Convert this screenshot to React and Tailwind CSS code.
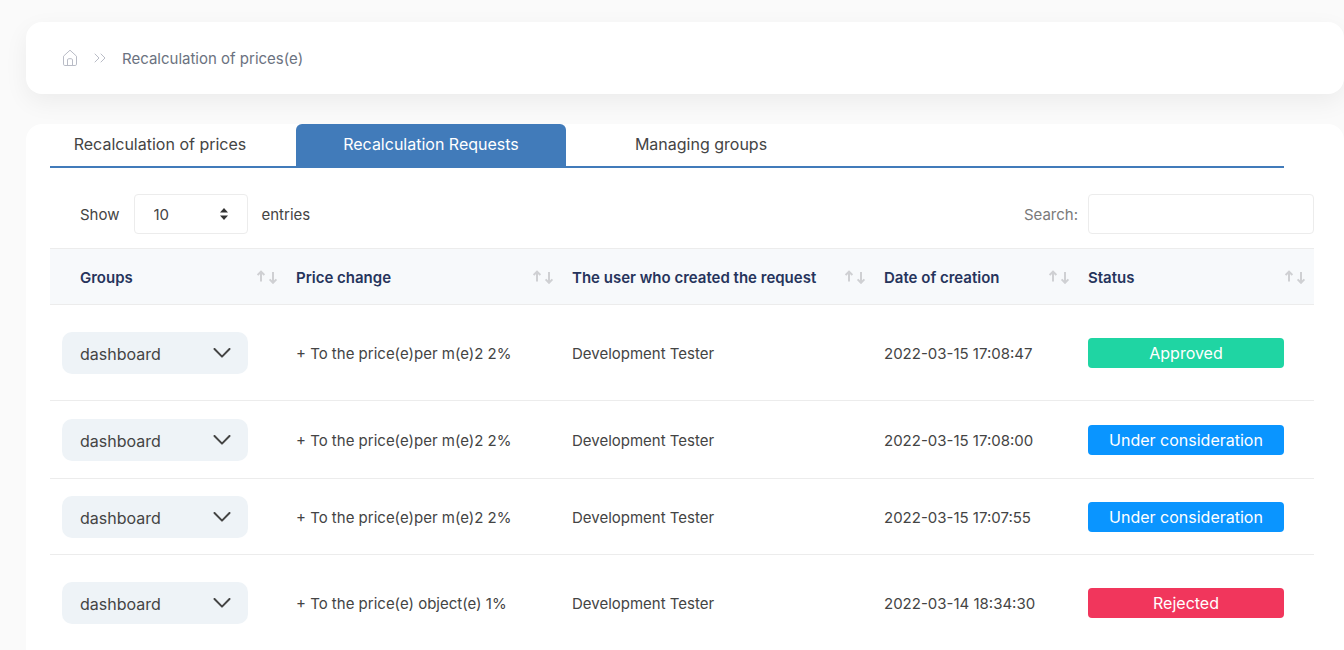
import React, { useState } from 'react';

const tabs = [
  { id: 'prices', label: 'Recalculation of prices', width: 'w-[246px] pr-[26px]' },
  { id: 'requests', label: 'Recalculation Requests', width: 'w-[270px]' },
  { id: 'groups', label: 'Managing groups', width: 'w-[270px]' },
];

const columns = [
  { key: 'groups', label: 'Groups', col: 'w-[234px]', pad: 'pr-1.5 pl-[30px]' },
  { key: 'change', label: 'Price change', col: 'w-[276px]', pad: 'pr-1.5 pl-3' },
  { key: 'user', label: 'The user who created the request', col: 'w-[312px]', pad: 'pr-1.5 pl-3' },
  { key: 'date', label: 'Date of creation', col: 'w-[204px]', pad: 'pr-1.5 pl-3' },
  { key: 'status', label: 'Status', col: 'w-[238px]', pad: 'pr-2 pl-3' },
];

const statusStyles = {
  Approved: 'bg-[#1fd5a3]',
  'Under consideration': 'bg-[#0a95ff]',
  Rejected: 'bg-[#f1365c]',
};

const requests = [
  { id: 1, change: '+ To the price(e)per m(e)2 2%', user: 'Development Tester', date: '2022-03-15 17:08:47', status: 'Approved', height: 'h-24' },
  { id: 2, change: '+ To the price(e)per m(e)2 2%', user: 'Development Tester', date: '2022-03-15 17:08:00', status: 'Under consideration', height: 'h-[78px]' },
  { id: 3, change: '+ To the price(e)per m(e)2 2%', user: 'Development Tester', date: '2022-03-15 17:07:55', status: 'Under consideration', height: 'h-[76px]' },
  { id: 4, change: '+ To the price(e) object(e) 1%', user: 'Development Tester', date: '2022-03-14 18:34:30', status: 'Rejected', height: 'h-24' },
];

const HomeIcon = () => (
  <svg className="h-[18px] w-4" viewBox="0 0 16 18" fill="none" stroke="currentColor" aria-hidden="true">
    <path d="M1.5 7.2L8 1.2L14.5 7.2V15.2C14.5 16 14 16.5 13.2 16.5H2.8C2 16.5 1.5 16 1.5 15.2V7.2Z" strokeLinejoin="round" />
    <path d="M5.5 16.5V11C5.5 10.2 6 9.7 6.8 9.7H9.2C10 9.7 10.5 10.2 10.5 11V16.5" />
  </svg>
);

const DoubleChevron = () => (
  <svg className="h-3 w-3" viewBox="0 0 12 12" fill="none" stroke="currentColor" strokeLinecap="round" strokeLinejoin="round" aria-hidden="true">
    <path d="M1 2L5 6L1 10" />
    <path d="M7 2L11 6L7 10" />
  </svg>
);

const SortIcon = () => (
  <svg className="h-3.5 w-[21px] shrink-0 text-[#cfd0d3]" viewBox="0 0 21 14" fill="none" stroke="currentColor" strokeWidth="2" aria-hidden="true">
    <path d="M4 11.5V2M0.6 5L4 1.6L7.4 5" />
    <path d="M16 2V12.4M12.6 9.4L16 12.8L19.4 9.4" />
  </svg>
);

const GroupSelect = ({ id }) => (
  <div className="relative w-[186px]">
    <select aria-label={`Groups of request ${id}`} className="h-[42px] w-full appearance-none rounded-[10px] bg-[#eef3f7] pt-0.5 pr-10 pl-[18px] text-base text-[#444] outline-none">
      <option>dashboard</option>
    </select>
    <svg className="pointer-events-none absolute top-4 right-[17px] h-2.5 w-[18px] text-[#444]" viewBox="0 0 18 10" fill="none" stroke="currentColor" strokeWidth="2" aria-hidden="true">
      <path d="M1.5 1L9 8.6L16.5 1" strokeLinecap="round" strokeLinejoin="round" />
    </svg>
  </div>
);

const App = () => {
  const [activeTab, setActiveTab] = useState('requests');
  const [search, setSearch] = useState('');

  const rows = requests.filter((item) => `${item.change} ${item.user} ${item.date} ${item.status}`.toLowerCase().includes(search.toLowerCase()));

  return (
    <div className="flex h-screen flex-col gap-[30px] overflow-hidden bg-[#fafafa] pt-[22px] pl-[26px] font-['Inter',sans-serif] text-base text-[#444]">
      <nav aria-label="Breadcrumb" className="flex h-[72px] shrink-0 items-center rounded-2xl bg-white pl-9 text-[#b9bcc6] shadow-[0_8px_24px_rgba(0,0,0,0.06)]">
        <a href="#home" aria-label="Home"><HomeIcon /></a>
        <span className="mx-4"><DoubleChevron /></span>
        <span className="pt-0.5 text-[15px] text-[#6b7280]">Recalculation of prices(e)</span>
      </nav>

      <main className="flex-1 rounded-t-2xl bg-white pr-[30px] pl-6">
        <div role="tablist" className="mr-[30px] flex border-b-2 border-[#417bba]">
          {tabs.map((tab) => (
            <button
              key={tab.id}
              type="button"
              role="tab"
              aria-selected={activeTab === tab.id}
              onClick={() => setActiveTab(tab.id)}
              className={`h-[42px] rounded-t-md pb-0.5 text-center whitespace-nowrap ${tab.width} ${activeTab === tab.id ? 'bg-[#417bba] text-white' : 'text-[#444]'}`}
            >
              {tab.label}
            </button>
          ))}
        </div>

        <div className="flex items-center justify-between pt-[26px] pb-3.5 pl-[30px] text-[15px]">
          <div className="flex items-center gap-3.5">
            <label htmlFor="page-size" className="pt-0.5">Show</label>
            <div className="relative">
              <select id="page-size" defaultValue="10" className="h-10 w-[114px] appearance-none rounded border border-[#ececec] bg-white pt-0.5 pl-[19px] outline-none">
                <option>10</option>
                <option>25</option>
                <option>50</option>
                <option>100</option>
              </select>
              <svg className="pointer-events-none absolute top-3.5 right-5 h-3 w-2" viewBox="0 0 8 12" fill="#333" aria-hidden="true">
                <path d="M4 0L8 4.5H0L4 0Z" />
                <path d="M4 12L0 7.5H8L4 12Z" />
              </svg>
            </div>
            <span className="pt-0.5">entries</span>
          </div>
          <div className="flex items-center gap-2.5">
            <label htmlFor="search" className="pt-0.5 text-[#7a7a7a]">Search:</label>
            <input id="search" type="search" value={search} onChange={(e) => setSearch(e.target.value)} className="h-10 w-[226px] rounded border border-[#ececec] bg-white px-3 outline-none" />
          </div>
        </div>

        <table className="w-full table-fixed border-separate border-spacing-0 text-left text-[15px]">
          <colgroup>
            {columns.map((column) => <col key={column.key} className={column.col} />)}
          </colgroup>
          <thead>
            <tr className="h-[57px] bg-[#f7f9fb]">
              {columns.map((column) => (
                <th key={column.key} scope="col" className={`border-y border-[#ececec] font-semibold text-[#26345c] ${column.pad}`}>
                  <button type="button" className="flex w-full items-center justify-between whitespace-nowrap">
                    <span className="pt-1">{column.label}</span>
                    <SortIcon />
                  </button>
                </th>
              ))}
            </tr>
          </thead>
          <tbody>
            {rows.map((item) => (
              <tr key={item.id} className={`whitespace-nowrap ${item.height}`}>
                <td className="border-b border-[#ececec] pl-3"><GroupSelect id={item.id} /></td>
                <td className="border-b border-[#ececec] pt-1 pl-3">{item.change}</td>
                <td className="border-b border-[#ececec] pt-1 pl-3">{item.user}</td>
                <td className="border-b border-[#ececec] pt-1 pl-3">{item.date}</td>
                <td className="border-b border-[#ececec] pr-[30px] pl-3">
                  <div className={`flex h-[30px] items-center justify-center rounded text-base text-white ${statusStyles[item.status]}`}>{item.status}</div>
                </td>
              </tr>
            ))}
          </tbody>
        </table>
      </main>
    </div>
  );
};

export default App;
